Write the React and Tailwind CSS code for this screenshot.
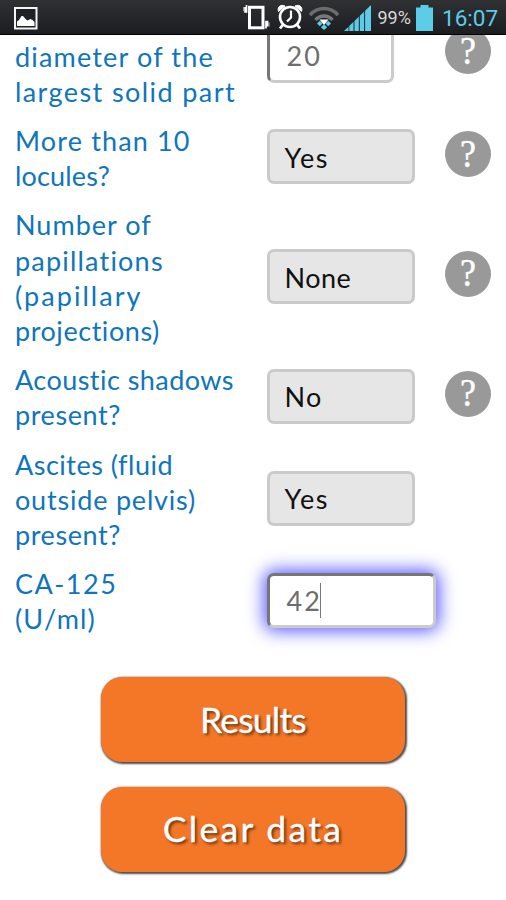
import React from 'react';
import clsx from 'clsx';

const rows = [
  {
    id: 'solid',
    // scrolled half under the status bar
    className: '-mt-[31.7px] pt-[35.2px]',
    lines: [
      { text: 'diameter of the', spacing: 'tracking-[1.17px]' },
      { text: 'largest solid part', spacing: 'tracking-[1.41px]' },
    ],
    input: '20',
    help: true,
    scrolled: true,
  },
  {
    id: 'locules',
    lines: [
      { text: 'More than 10', spacing: 'tracking-[1.15px]' },
      { text: 'locules?', spacing: 'tracking-[0.15px]' },
    ],
    select: 'Yes',
    spacing: 'tracking-[1.6px]',
    help: true,
  },
  {
    id: 'papillations',
    lines: [
      { text: 'Number of', spacing: 'tracking-[1px]' },
      { text: 'papillations', spacing: 'tracking-[1.2px]' },
      { text: '(papillary', spacing: 'tracking-[2.05px]' },
      { text: 'projections)', spacing: 'tracking-[0.55px]' },
    ],
    select: 'None',
    spacing: 'tracking-[0.5px]',
    help: true,
  },
  {
    id: 'shadows',
    lines: [
      { text: 'Acoustic shadows', spacing: 'tracking-[0.45px]' },
      { text: 'present?', spacing: 'tracking-[0.6px]' },
    ],
    select: 'No',
    spacing: 'tracking-[1.3px]',
    help: true,
  },
  {
    id: 'ascites',
    lines: [
      { text: 'Ascites (fluid', spacing: 'tracking-[0.5px]' },
      { text: 'outside pelvis)', spacing: 'tracking-[0.8px]' },
      { text: 'present?', spacing: 'tracking-[0.6px]' },
    ],
    select: 'Yes',
    spacing: 'tracking-[1.6px]',
  },
  {
    id: 'ca125',
    lines: [
      { text: 'CA-125', spacing: 'tracking-[1.5px]' },
      { text: '(U/ml)', spacing: 'tracking-[1.15px]' },
    ],
    input: '42',
    focused: true,
  },
];

const PictureIcon = () => (
  <svg width="24" height="23" viewBox="0 0 24 23">
    <rect x="1" y="1" width="21.5" height="20.5" fill="#1f2124" stroke="#f4f4f4" strokeWidth="2" />
    <path d="M3 19v-4.500l2-1.500 2.500-4 1.500 0 3 3.500 1.500 1 3-1.500 2 1 2 2v4z" fill="#fff" />
  </svg>
);

const VibrateIcon = () => (
  <svg width="27" height="26" viewBox="0 0 27 26" fill="none" stroke="#fff">
    <rect x="6.500" y="3.300" width="13.500" height="20.500" strokeWidth="3" />
    <path d="M3.500 1v7h-1.500v-5M23 24.500v-7h1.500v5" strokeWidth="1.700" />
    <path d="M.8 3v4M25.900 18.500v4" strokeWidth="1.200" stroke="#bbb" />
  </svg>
);

const AlarmIcon = () => (
  <svg width="26" height="26" viewBox="0 0 26 26" fill="none" stroke="#fff">
    <circle cx="13" cy="13" r="10" strokeWidth="2.600" />
    <path d="M14 6.500v7l-4 4" strokeWidth="2.200" />
    <path d="M1.500 7.500C0 3 3.500 0 8 2zM24.500 7.500C26 3 22.500 0 18 2z" fill="#fff" stroke="#fff" strokeWidth="1" />
    <path d="M6 20.500l-3 4M20 20.500l3 4" strokeWidth="2.800" />
  </svg>
);

const WifiIcon = () => (
  <svg width="30" height="24" viewBox="0 0 30 24" fill="none">
    <path d="M1 9C8.500.3 21.500.3 29 9" stroke="#6b6c6e" strokeWidth="3.600" />
    <path d="M6.500 14C11 8.700 19 8.700 23.500 14" stroke="#77787a" strokeWidth="3.400" />
    <path d="M10.500 13.500h9L15 19z" fill="#fff" />
    <path d="M8 17.500l2.800-2.800 2.800 2.800-2.800 2.800zM16.400 17.500l2.800-2.800 2.800 2.800-2.800 2.800zM11.800 21.200L15 18.200l3.200 3-3.200 2.800z" fill="#5ccde8" />
  </svg>
);

const SignalIcon = () => (
  <svg width="27" height="26" viewBox="0 0 27 26">
    <path
      d="M0 26l4.500-4.300V26zM5.300 26v-5.100l4.200-4.100V26zM10.500 26V15.900l4.300-4.100V26zM15.800 26V10.800l4.300-4.100V26zM21.100 26V5.700L27 0v26z"
      fill="#5ccde8"
    />
  </svg>
);

const BatteryIcon = () => (
  <svg width="17" height="26" viewBox="0 0 17 26">
    <path d="M4.500 0h8v2.500H17V26H0V2.500h4.500z" fill="#5ccde8" />
  </svg>
);

function StatusBar() {
  return (
    <header className="relative z-10 flex h-[35px] shrink-0 items-start border-b border-black bg-linear-to-b from-[#303133] to-[#1c1d20] pl-3.5 font-['Roboto',sans-serif]">
      <div className="mt-[6.5px]">
        <PictureIcon />
      </div>
      <div className="ml-[205px] mt-[4px]">
        <VibrateIcon />
      </div>
      <div className="ml-[7px] mt-[4px]">
        <AlarmIcon />
      </div>
      <div className="ml-[6px] mt-[6px]">
        <WifiIcon />
      </div>
      <div className="ml-[5px] mt-[5px]">
        <SignalIcon />
      </div>
      <span className="ml-[6.5px] mt-[6px] w-[38.5px] text-[18px] leading-[24px] whitespace-nowrap text-[#d9d9d9]">99%</span>
      <div className="mt-[5px]">
        <BatteryIcon />
      </div>
      <span className="ml-[9px] mt-[4px] text-[22.5px] leading-[28px] text-[#5ccde8]">16:07</span>
    </header>
  );
}

function HelpButton({ scrolled }) {
  return (
    <button
      className={clsx(
        "ml-auto mr-[15.5px] flex size-[46px] items-center justify-center rounded-full bg-[#999] font-['Liberation_Serif',serif] text-[40px] leading-none text-white [-webkit-text-stroke:0.4px_white]",
        scrolled ? '-mt-[45px]' : '-mt-[7.5px]'
      )}
    >
      <span className="-mt-px ml-px scale-x-90">?</span>
    </button>
  );
}

function Row({ row }) {
  return (
    <div className={clsx('flex items-center', row.className)}>
      <label className="w-[252px] shrink-0 whitespace-nowrap text-[#0f75bc]">
        {row.lines.map((line) => (
          <span key={line.text} className={clsx('block', line.spacing)}>
            {line.text}
          </span>
        ))}
      </label>
      {row.select && (
        <div
          className={clsx(
            '-mt-[2.5px] flex h-[55px] w-[147.5px] items-center rounded-[7px] border-3 border-[#cacaca] bg-[#e6e6e6] pl-[14.5px] pt-[2px] text-[#111]',
            row.spacing
          )}
        >
          {row.select}
        </div>
      )}
      {row.input && (
        <div
          className={clsx(
            'flex h-[55px] items-center rounded-[7px] border-3 border-t-[#767676] border-r-[#cbcbcb] border-b-[#cbcbcb] border-l-[#767676] bg-white pl-[16.5px] pt-[1px] tracking-[2px] text-[#6e6e6e]',
            row.focused ? '-mt-[2.5px] w-[169px] shadow-[0_0_17px_3px_rgba(0,0,255,0.65)]' : '-mt-[37px] w-[126.5px]'
          )}
        >
          {row.input}
          {row.focused && <span className="-ml-[2px] -mt-[1px] h-[35px] w-[1.5px] bg-[#777]" />}
        </div>
      )}
      {row.help && <HelpButton scrolled={row.scrolled} />}
    </div>
  );
}

function ActionButton({ className, children }) {
  return (
    <button
      className={clsx(
        'h-[85px] w-[304px] rounded-[21px] bg-[#f47728] text-[35.5px] text-white shadow-[1px_1px_2px_1px_rgba(0,0,0,0.7)] [text-shadow:2px_2px_3px_rgba(0,0,0,0.6)] [-webkit-text-stroke:0.3px_white]',
        className
      )}
    >
      {children}
    </button>
  );
}

export default function App() {
  return (
    <div className="flex h-[900px] w-[506px] flex-col overflow-hidden bg-white font-['Lato',sans-serif]">
      <StatusBar />
      <main className="flex min-h-0 flex-1 flex-col">
        <form className="flex flex-col gap-[14px] pl-[15px] text-[27px] leading-[35.2px]">
          {rows.map((row) => (
            <Row key={row.id} row={row} />
          ))}
        </form>
        <div className="mt-[40.5px] ml-[101px] flex flex-col gap-[24.5px]">
          <ActionButton className="tracking-[-0.8px]">Results</ActionButton>
          <ActionButton className="tracking-[2.3px]">Clear data</ActionButton>
        </div>
      </main>
    </div>
  );
}
